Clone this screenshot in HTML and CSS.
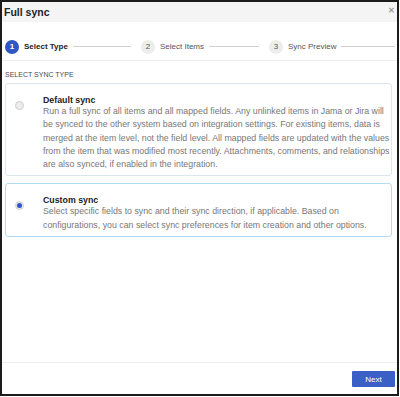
FILE: index.html
```html
<!DOCTYPE html>
<html>
<head>
<meta charset="utf-8">
<link rel="stylesheet" href="styles.css">
</head>
<body>
<div class="dialog">
  <div class="header">
    <div class="title">Full sync</div>
    <div class="close">&#x2715;</div>
  </div>
  <div class="stepper">
    <div class="step s1 active"><span class="num">1</span><span class="label">Select Type</span><span class="line"></span></div>
    <div class="step s2"><span class="num">2</span><span class="label">Select Items</span><span class="line"></span></div>
    <div class="step s3"><span class="num">3</span><span class="label">Sync Preview</span><span class="line"></span></div>
  </div>
  <div class="body">
    <div class="section-label">SELECT SYNC TYPE</div>
    <div class="card">
      <span class="radio"></span>
      <div class="text">
        <div class="card-title">Default sync</div>
        <div class="desc">Run a full sync of all items and all mapped fields. Any unlinked items in Jama or Jira will<br>be synced to the other system based on integration settings. For existing items, data is<br>merged at the item level, not the field level. All mapped fields are updated with the values<br>from the item that was modified most recently. Attachments, comments, and relationships<br>are also synced, if enabled in the integration.</div>
      </div>
    </div>
    <div class="card selected">
      <span class="radio checked"></span>
      <div class="text">
        <div class="card-title">Custom sync</div>
        <div class="desc">Select specific fields to sync and their sync direction, if applicable. Based on<br>configurations, you can select sync preferences for item creation and other options.</div>
      </div>
    </div>
  </div>
  <div class="footer">
    <button class="next">Next</button>
  </div>
</div>
</body>
</html>
```
FILE: styles.css
```css
html, body {
  margin: 0;
  padding: 0;
  background: #fff;
}
.dialog {
  width: 399px;
  height: 396px;
  box-sizing: border-box;
  border: 2px solid #1b1b1b;
  display: flex;
  flex-direction: column;
  font-family: "Liberation Sans", Arial, sans-serif;
  color: #333;
}
.header {
  height: 20px;
  background: #f4f4f4;
  display: flex;
  align-items: center;
  justify-content: space-between;
  padding: 0 2px 0 2px;
}
.title {
  font-size: 10.5px;
  font-weight: bold;
  color: #222;
}
.close {
  font-size: 7.5px;
  color: #999;
  align-self: flex-start;
  margin-top: 4px;
  font-weight: bold;
}
.stepper {
  height: 38px;
  display: grid;
  grid-template-columns: 126px 118px 1fr;
  column-gap: 10px;
  align-items: center;
  padding: 0 2px 0 3px;
  border-bottom: 1px solid #efefef;
}
.step {
  display: flex;
  align-items: center;
  font-size: 8px;
  color: #555;
  margin-top: 11px;
}
.num {
  width: 14px;
  height: 14px;
  border-radius: 50%;
  background: #ededed;
  color: #555;
  display: flex;
  align-items: center;
  justify-content: center;
  font-size: 8px;
  flex: none;
}
.step.active .num {
  background: #2f57c3;
  color: #fff;
  font-weight: bold;
}
.label {
  margin-left: 5px;
  white-space: nowrap;
}
.step.active .label {
  font-weight: bold;
  color: #222;
}
.line {
  flex: 1;
  height: 1px;
  background: #cfcfcf;
  margin-left: 5px;
}
.body {
  flex: 1;
  padding: 9px 5px 0 3px;
}
.section-label {
  font-size: 7px;
  line-height: 10px;
  color: #4a4a4a;
  margin-bottom: 3px;
}
.card {
  border: 1px solid #dbe7ef;
  border-radius: 3px;
  display: flex;
  align-items: flex-start;
  padding: 11px 0 4px 9px;
  margin-bottom: 7px;
}
.card.selected {
  border-color: #b2dcf1;
}
.radio {
  width: 7px;
  height: 7px;
  border-radius: 50%;
  border: 1px solid #cfcfcf;
  background: #ececec;
  flex: none;
  margin-top: 6px;
  margin-right: 19px;
  position: relative;
}
.radio.checked {
  background: #e6e6e6;
  border-color: #d4d4d4;
}
.radio.checked::after {
  content: "";
  position: absolute;
  left: 1px;
  top: 1px;
  width: 5px;
  height: 5px;
  border-radius: 50%;
  background: #2f55c8;
}
.text {
  flex: 1;
  min-width: 0;
}
.card-title {
  font-size: 8.8px;
  line-height: 10px;
  font-weight: bold;
  color: #222;
}
.desc {
  font-size: 8.8px;
  line-height: 13.3px;
  color: #777;
  white-space: nowrap;
}
.footer {
  border-top: 1px solid #efefef;
  padding: 8px 2px 7px 0;
  display: flex;
  justify-content: flex-end;
}
.next {
  width: 43px;
  height: 16px;
  border: none;
  border-radius: 1px;
  background: #3a5fc6;
  color: #fff;
  font-family: "Liberation Sans", Arial, sans-serif;
  font-size: 8px;
  padding: 0;
}
```
